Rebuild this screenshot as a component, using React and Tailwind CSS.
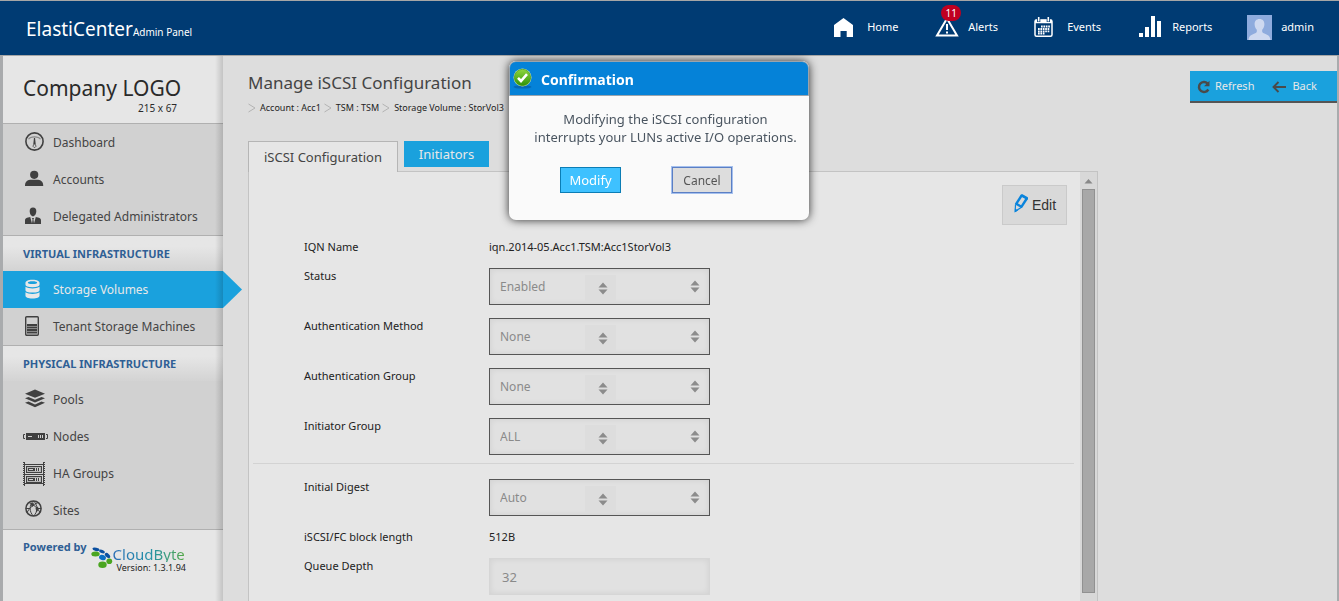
import React from "react";

const accountLinks = [
  { label: "Dashboard", Icon: GaugeIcon },
  { label: "Accounts", Icon: PersonIcon },
  { label: "Delegated Administrators", Icon: SuitIcon },
];

const virtualLinks = [
  { label: "Storage Volumes", Icon: DatabaseIcon, active: true },
  { label: "Tenant Storage Machines", Icon: TowerIcon },
];

const physicalLinks = [
  { label: "Pools", Icon: LayersIcon },
  { label: "Nodes", Icon: NodeIcon, wide: true },
  { label: "HA Groups", Icon: RackIcon, wide: true },
  { label: "Sites", Icon: GlobeIcon },
];

function GaugeIcon() {
  return (
    <svg width="20" height="20" viewBox="0 0 20 20" fill="none" stroke="#404040">
      <circle cx="9.500" cy="9.500" r="8.600" strokeWidth="1.600" />
      <path d="M3.500 7.200C5.500 4 13.500 4 15.500 7.200" stroke="#888" strokeWidth="1.200" />
      <path d="M9.500 6.500 8.600 12.500 8 14.300 9.500 15.800 11 14.300 10.400 12.500Z" strokeWidth=".8" />
      <path d="M9.500 6v6.500" strokeWidth="1.200" />
    </svg>
  );
}

function PersonIcon() {
  return (
    <svg width="20" height="18" viewBox="0 0 20 18" fill="#404040">
      <circle cx="9.200" cy="4.800" r="4.100" />
      <path d="M0 16v-1C0 12 2 10 5 9.700h8.200c3 .3 5 2.300 5 5.300v1Z" />
    </svg>
  );
}

function SuitIcon() {
  return (
    <svg width="18" height="18" viewBox="0 0 18 18" fill="#404040">
      <path d="M8 .5c2.200 0 3.500 1.600 3.300 4-.1 2-1.400 4.800-3.300 4.800S4.800 6.500 4.700 4.500C4.500 2.100 5.800.5 8 .5Z" />
      <path d="M0 17v-3.500c0-1.500.7-2.300 2-2.700l3.200-.9L7 16.500l.6-4-.7-1.500h2.200l-.7 1.500.6 4 1.800-6.600 3.200.9c1.300.4 2 1.200 2 2.700V17Z" />
    </svg>
  );
}

function DatabaseIcon() {
  return (
    <svg width="15" height="20" viewBox="0 0 16 21" fill="#e8e8e8">
      <path d="M.5 4C.5 2 3 .5 8 .5S15.500 2 15.500 4v2c0 1.500-2.500 2.500-7.500 2.500S.5 7.500.5 6ZM8 5.200c3 0 5-.6 5-1.400S11 2.300 8 2.300s-5 .7-5 1.500 2 1.400 5 1.400Z" fillRule="evenodd" />
      <path d="M.5 8.200C2.500 9.500 5 10 8 10s5.500-.5 7.500-1.800v3.600c0 1.500-2.500 2.500-7.500 2.500s-7.500-1-7.500-2.500Z" />
      <path d="M.5 14c2 1.300 4.500 1.800 7.500 1.800s5.500-.5 7.500-1.800v3.600c0 1.700-2.500 2.900-7.500 2.900s-7.500-1.200-7.500-2.900Z" />
    </svg>
  );
}

function TowerIcon() {
  return (
    <svg width="15" height="20" viewBox="0 0 15 20" fill="none" stroke="#404040">
      <rect x=".7" y=".7" width="12.600" height="18.600" rx="1" strokeWidth="1.400" />
      <path d="M2 9h10M2 11.500h10M2 14h10M2 16.500h10" strokeWidth="1.900" />
    </svg>
  );
}

function LayersIcon() {
  return (
    <svg width="21" height="19" viewBox="0 0 21 19" fill="#404040">
      <path d="M10 .5 20 4.700 10 8.800 0 4.700Z" />
      <path d="M0 9.200 3.500 8l6.500 2.800L16.500 8 20 9.200l-10 4.300Z" />
      <path d="M0 13.800l3.500-1.300 6.500 2.900 6.500-2.900 3.500 1.300-10 4.400Z" />
    </svg>
  );
}

function NodeIcon() {
  return (
    <svg width="25" height="9" viewBox="0 0 25 9" fill="none">
      <path d="M2 2.500H.5v4H2M23 2.500h1.500v4H23" stroke="#404040" />
      <rect x="3" y="1" width="19" height="7" fill="#404040" />
      <path d="M5 4.500h4M15.500 3v3M17.500 3v3M19.500 3v3" stroke="#d1d1d1" />
    </svg>
  );
}

function RackIcon() {
  return (
    <svg width="22" height="24" viewBox="0 0 22 24" shapeRendering="crispEdges" fill="none" stroke="#404040">
      <path d="M.5 0v24M21.500 0v24" strokeDasharray="1 1" />
      <path d="M1.500 0v24M20.500 0v24M2 2.500h18M2 12.500h18M2 21.500h18" />
      <path d="M3 4h16v7H3zM3 13.500h16v7H3z" fill="#404040" stroke="none" />
      <path d="M4.500 5.500h13v4h-13zM4.500 15.500h13v4h-13z" stroke="#b5b5b5" />
      <path d="M6 7.500h4M12.500 6v3M14.500 6v3M16.500 6v3M6 17.500h4M12.500 16v3M14.500 16v3M16.500 16v3" stroke="#d1d1d1" />
    </svg>
  );
}

function GlobeIcon() {
  return (
    <svg width="18" height="20" viewBox="0 0 18 20" fill="none" stroke="#404040">
      <circle cx="8.500" cy="8.500" r="7.600" strokeWidth="1.500" />
      <path d="M8.500 1c-4.500 4-4.500 11 0 15M8.500 1c4.500 4 4.500 11 0 15M4 2.500c5 2 9 6 11 10M13 2.500c-5 2-9 6-11 10M1 8.500h4M12 8.500h4" />
      <path d="M5.500 4l3-1.500.5 3-2 1.500ZM10.500 8l2.500-1.500.5 3-2 3Z" fill="#404040" stroke="none" />
    </svg>
  );
}

function HomeIcon() {
  return (
    <svg width="20" height="19" viewBox="0 0 20 19" fill="#fff">
      <path d="M9.500 0 19 7v12h-6.300v-6H6.500v6H0V7Z" />
    </svg>
  );
}

function AlertIcon() {
  return (
    <svg width="24" height="20" viewBox="0 0 24 20" fill="none" stroke="#fff">
      <path d="M12 1.500 22 18.500H2Z" strokeWidth="2" />
      <path d="M12 7v6M12 14.500v2" strokeWidth="2" />
    </svg>
  );
}

function CalendarIcon() {
  return (
    <svg width="19" height="20" viewBox="0 0 19 20" fill="none" stroke="#fff">
      <rect x="1" y="3" width="17" height="16.200" rx="1.500" strokeWidth="1.500" />
      <path d="M1 4.500h17" strokeWidth="3.500" />
      <path d="M4.700 0v5M14.300 0v5" stroke="#003b73" strokeWidth="3.200" />
      <path d="M4.700 0v4.500M14.300 0v4.500" strokeWidth="1.600" />
      <path d="M7 9.500h9M4 12h12M4 14.300h12M4 16.500h7" strokeWidth="1.800" strokeDasharray="1.700 .7" />
    </svg>
  );
}

function BarsIcon() {
  return (
    <svg width="23" height="22" viewBox="0 0 23 22" fill="#fff">
      <path d="M0 17h4v4H0zM6 11h4v10H6zM12 0h4v21h-4zM18 5h4v16h-4z" />
    </svg>
  );
}

function AvatarIcon() {
  return (
    <svg width="25" height="25" viewBox="0 0 25 25">
      <path d="M0 0h25v25H0z" fill="#8eabdd" />
      <path d="M12.500 4c3.300 0 5 2.200 4.900 5.300-.1 2.500-1 4.200-2.200 5.400-.3 2.300.2 3 2.200 3.900 3 1.200 5.600 2 6.100 6.400h-22c.5-4.400 3.100-5.200 6.100-6.400 2-.9 2.500-1.600 2.200-3.900-1.200-1.200-2.100-2.900-2.200-5.400C7.500 6.200 9.200 4 12.500 4Z" fill="#ced9f0" />
    </svg>
  );
}

function RefreshIcon() {
  return (
    <svg width="14" height="14" viewBox="0 0 14 14" fill="none">
      <path d="M10.500 3.400A5 5 0 1 0 11.300 9.500" stroke="#4a4a4a" strokeWidth="2.500" />
      <path d="M12.500.8v5.400H7.100Z" fill="#4a4a4a" />
    </svg>
  );
}

function BackIcon() {
  return (
    <svg width="14" height="12" viewBox="0 0 14 12" fill="none" stroke="#4a4a4a" strokeWidth="1.900">
      <path d="M6.500 1 1.500 6l5 5M1.500 6H14" />
    </svg>
  );
}

function PencilIcon() {
  return (
    <svg width="15" height="19" viewBox="0 0 15 19" fill="none" stroke="#0a84dc">
      <path d="M7.600 1.500 12.800 4.500 7.400 12.800 2.200 9.800Z" strokeWidth="2.400" strokeLinejoin="round" />
      <path d="M6.300 1.500 8.500.2 13.800 3.200v2.500Z" fill="#0a84dc" stroke="none" />
      <path d="M1.500 10.500 1.200 17.300 7.200 13.500" strokeWidth="1.200" />
      <path d="M.8 14.500v3.700l3.500-1.700Z" fill="#0a84dc" stroke="none" />
    </svg>
  );
}

function CheckIcon() {
  return (
    <svg width="20" height="21" viewBox="0 0 20 21">
      <defs>
        <linearGradient id="green" x1="0" y1="0" x2="0" y2="1">
          <stop offset="0" stopColor="#8ed63e" />
          <stop offset="1" stopColor="#2f9208" />
        </linearGradient>
      </defs>
      <ellipse cx="9.500" cy="19" rx="9" ry="1.600" fill="#0568b5" />
      <circle cx="9.500" cy="9.500" r="9" fill="#cfe8b0" />
      <circle cx="9.500" cy="9.500" r="8.200" fill="url(#green)" stroke="#3d8d14" strokeWidth=".6" />
      <path d="m5 9.800 3 3.200 6-6.800" fill="none" stroke="#fff" strokeWidth="2.600" />
    </svg>
  );
}

function CloudByteMark() {
  return (
    <svg width="22" height="22" viewBox="0 0 22 22">
      <g fill="#0a4fa0">
        <ellipse cx="5" cy="2.300" rx="3.600" ry="1.700" transform="rotate(12 5 2.300)" />
        <ellipse cx="11" cy="4.500" rx="3" ry="1.700" transform="rotate(20 11 4.500)" />
        <ellipse cx="16.500" cy="8.500" rx="3.200" ry="1.900" transform="rotate(45 16.500 8.500)" />
        <ellipse cx="11.500" cy="10.500" rx="3.500" ry="2.600" fill="#0a6fc4" transform="rotate(20 11.500 10.500)" />
      </g>
      <g fill="#4aa520">
        <ellipse cx="4.500" cy="7" rx="4.200" ry="2.500" />
        <ellipse cx="18.300" cy="14.300" rx="2.900" ry="2.800" />
        <ellipse cx="11.500" cy="17.700" rx="4.200" ry="3.300" />
      </g>
    </svg>
  );
}

function SortArrows() {
  return (
    <svg width="10" height="13" viewBox="0 0 10 13" fill="#8c8c8c">
      <path d="M5 .5 9.500 5.500h-9zM5 12.500.5 7.500h9z" />
    </svg>
  );
}

function NavGroup({ links }) {
  return (
    <ul className="border-b border-[#b0b0b0] bg-[#d1d1d1]">
      {links.map(({ label, Icon, active, wide }) => (
        <li key={label}>
          <a
            href="#"
            className={
              active
                ? "relative flex h-[37px] items-center bg-[#1aa1dd] pl-5 text-[#e8e8e8]"
                : "flex h-[37px] items-center pl-5 text-[#444]"
            }
          >
            <span className={wide ? "w-[30px] shrink-0" : "w-[30px] shrink-0 pb-[2px] pl-[2px]"}>
              <Icon />
            </span>
            {label}
            {active && (
              <svg className="absolute top-0 left-full" width="20" height="37" viewBox="0 0 20 37">
                <path d="M0 0 19 18.500 0 37Z" fill="#1aa1dd" />
              </svg>
            )}
          </a>
        </li>
      ))}
    </ul>
  );
}

function NavHeading({ children }) {
  return (
    <h2 className="flex h-[35px] items-center bg-linear-to-b from-[#e6e6e6] from-30% to-[#d3d3d3] pt-px pl-5 text-[11px] font-bold text-[#2f5f95]">
      {children}
    </h2>
  );
}

function Sidebar() {
  return (
    <aside className="relative z-10 w-[220px] shrink-0 bg-[#e6e6e6] text-[12px]">
      <div className="flex h-[68px] flex-col border-b border-[#b0b0b0] pt-[18px] pl-5 text-[#2a2a2a]">
        <span className="text-[21px] leading-7">Company LOGO</span>
        <span className="pl-[115px] text-[10px] leading-3 whitespace-nowrap">215 x 67</span>
      </div>
      <nav aria-label="Main">
        <NavGroup links={accountLinks} />
        <NavHeading>VIRTUAL INFRASTRUCTURE</NavHeading>
        <NavGroup links={virtualLinks} />
        <NavHeading>PHYSICAL INFRASTRUCTURE</NavHeading>
        <NavGroup links={physicalLinks} />
      </nav>
      <div className="flex pt-[9px] pl-5">
        <span className="text-[11px] leading-4 font-bold text-[#2f5f95]">Powered by</span>
        <span className="mt-2 ml-1">
          <CloudByteMark />
        </span>
        <div className="mt-[7px] flex flex-col">
          <span className="bg-linear-to-r from-[#2a6db5] via-[#2490a8] to-[#55a83c] bg-clip-text text-[15px] leading-4 text-transparent">
            CloudByte
          </span>
          <span className="pl-1 text-[9px] leading-3 text-[#222]">Version: 1.3.1.94</span>
        </div>
      </div>
      <div className="pointer-events-none absolute inset-y-0 right-0 w-2 bg-linear-to-r from-transparent to-black/15" />
    </aside>
  );
}

function Header() {
  return (
    <header className="flex h-14 items-center border-t border-b border-[#a6a6a6] bg-[#003b73] pr-[25px] pb-[2px] pl-[26px] text-[11px] text-white">
      <div className="flex items-baseline pt-1">
        <span className="text-[19px]">ElastiCenter</span>
        <span className="text-[10px]">Admin Panel</span>
      </div>
      <nav aria-label="Toolbar" className="ml-auto flex items-center">
        <a href="#" className="flex w-[101px] items-center gap-[13px]">
          <HomeIcon />
          Home
        </a>
        <a href="#" className="relative flex w-[99px] items-center gap-[9px]">
          <AlertIcon />
          Alerts
          <span className="absolute -top-3 left-[6px] flex h-4 w-5 items-center justify-center rounded-full bg-[#c00020] text-[10px]">
            11
          </span>
        </a>
        <a href="#" className="flex w-[105px] items-center gap-[14px]">
          <CalendarIcon />
          Events
        </a>
        <a href="#" className="flex w-[108px] items-center gap-[10px]">
          <BarsIcon />
          Reports
        </a>
        <a href="#" className="flex items-center gap-[9px]">
          <AvatarIcon />
          admin
        </a>
      </nav>
    </header>
  );
}

function FieldRow({ id, label, children }) {
  return (
    <div className="flex">
      <label htmlFor={id} className="w-[185px] shrink-0 leading-4">
        {label}
      </label>
      {children}
    </div>
  );
}

function SelectRow({ id, label, value }) {
  return (
    <FieldRow id={id} label={label}>
      <div className="relative w-[221px]">
        <select
          id={id}
          disabled
          className="block h-[37px] w-full appearance-none border border-[#555] bg-[#e1e1e1] px-[10px] text-[12px] text-[#8a8a8a] opacity-100 shadow-[inset_0_0_6px_rgba(0,0,0,0.08)]"
        >
          <option>{value}</option>
        </select>
        <span className="pointer-events-none absolute top-[7px] left-24 flex h-[26px] w-[31px] items-center justify-center bg-[#dddddd] pl-[5px]">
          <SortArrows />
        </span>
        <span className="pointer-events-none absolute top-3 right-[10px]">
          <SortArrows />
        </span>
      </div>
    </FieldRow>
  );
}

function ConfigForm() {
  return (
    <form className="flex-1 pl-1 text-[11px] text-[#222]">
      <div className="flex justify-end pt-[13px] pr-[13px]">
        <button
          type="button"
          className="flex h-10 w-[65px] items-center gap-[3px] border border-[#cacaca] bg-[#d9d9d9] pl-[11px] font-['Liberation_Sans',sans-serif] text-[14px] text-[#333]"
        >
          <span className="pb-1">
            <PencilIcon />
          </span>
          Edit
        </button>
      </div>
      <div className="mt-[14px] flex flex-col gap-[13px] pl-[51px]">
        <dl className="flex leading-4">
          <dt className="w-[185px] shrink-0">IQN Name</dt>
          <dd>iqn.2014-05.Acc1.TSM:Acc1StorVol3</dd>
        </dl>
        <SelectRow id="status" label="Status" value="Enabled" />
        <SelectRow id="auth-method" label="Authentication Method" value="None" />
        <SelectRow id="auth-group" label="Authentication Group" value="None" />
        <SelectRow id="initiator-group" label="Initiator Group" value="ALL" />
      </div>
      <hr className="mt-2 mr-[6px] border-[#d3d3d3]" />
      <div className="mt-[15px] flex flex-col gap-[13px] pl-[51px]">
        <SelectRow id="digest" label="Initial Digest" value="Auto" />
        <dl className="flex leading-4">
          <dt className="w-[185px] shrink-0">iSCSI/FC block length</dt>
          <dd>512B</dd>
        </dl>
        <FieldRow id="queue-depth" label="Queue Depth">
          <input
            id="queue-depth"
            type="text"
            disabled
            defaultValue="32"
            className="h-[37px] w-[221px] border border-[#d6d6d6] bg-[#e1e1e1] px-3 text-[13px] text-[#8a8a8a] shadow-[inset_0_0_6px_rgba(0,0,0,0.08)]"
          />
        </FieldRow>
      </div>
    </form>
  );
}

function Scrollbar() {
  return (
    <div className="flex w-[17px] flex-col items-center bg-[#d8d8d8]" aria-hidden="true">
      <svg className="shrink-0" width="17" height="17" viewBox="0 0 17 17" fill="#888">
        <path d="M8.500 7 12.500 11.500h-8z" />
      </svg>
      <div className="mb-2 w-[13px] flex-1 border border-[#919191] bg-[#a8a8a8]" />
    </div>
  );
}

function Breadcrumbs() {
  return (
    <nav aria-label="Breadcrumb" className="mt-[3px]">
      <ol className="flex text-[9px] leading-5 text-[#222]">
        {["Account : Acc1", "TSM : TSM", "Storage Volume : StorVol3"].map((crumb) => (
          <li key={crumb} className="flex items-center gap-1 pr-[3px]">
            <svg width="8" height="10" viewBox="0 0 8 10" fill="none" stroke="#b3b3b3">
              <path d="M.5 1 7 5 .5 9" />
            </svg>
            {crumb}
          </li>
        ))}
      </ol>
    </nav>
  );
}

function ConfirmDialog() {
  return (
    <div className="fixed inset-x-0 top-[61px] z-20 flex justify-center pr-[21px]">
      <div
        role="dialog"
        aria-labelledby="confirm-title"
        className="h-[159px] w-[300px] overflow-hidden rounded-[7px] bg-[#fafafa] text-[#4a5560] shadow-[0_0_10px_rgba(0,0,0,0.8)]"
      >
        <div className="flex h-[35px] items-center gap-2 rounded-t-[7px] border border-[#9aa4ad] bg-[#0582d8] pl-[3px] text-white">
          <CheckIcon />
          <h2 id="confirm-title" className="pt-[2px] text-[14px] font-bold">
            Confirmation
          </h2>
        </div>
        <p className="pt-[14px] pl-[13px] text-center text-[13px] leading-[18px]">
          Modifying the iSCSI configuration
          <br />
          interrupts your LUNs active I/O operations.
        </p>
        <div className="mt-[21px] flex gap-[51px] pl-[51px]">
          <button type="button" className="h-[26px] w-[61px] border border-[#0b7db5] bg-[#3ec1ff] pt-px text-[13px] text-white">
            Modify
          </button>
          <button
            type="button"
            className="h-[26px] w-[60px] border border-[#5b7fc4] bg-[#dddddd] pt-px text-[12px] text-[#555] ring-1 ring-[#a5c0ee]"
          >
            Cancel
          </button>
        </div>
      </div>
    </div>
  );
}

export default function App() {
  return (
    <div className="flex min-h-screen flex-col bg-[#a9abad] font-['Noto_Sans',sans-serif]">
      <Header />
      <div className="flex flex-1 pr-[2px] pl-[3px]">
        <Sidebar />
        <main className="flex flex-1 flex-col bg-[#dddddd] pl-[25px]">
          <div className="flex items-start justify-between pt-[15px]">
            <div>
              <h1 className="text-[17px] leading-6 text-[#444]">Manage iSCSI Configuration</h1>
              <Breadcrumbs />
            </div>
            <div className="flex h-8 w-[147px] items-center border-b-2 border-[#555] bg-[#1aa1dd] pt-px pl-[7px] text-[11px] text-[#e8e8e8]">
              <button type="button" className="flex items-center gap-1">
                <RefreshIcon />
                Refresh
              </button>
              <button type="button" className="ml-[18px] flex items-center gap-[6px]">
                <BackIcon />
                Back
              </button>
            </div>
          </div>
          <div role="tablist" className="mt-[23px] flex h-[30px] items-start gap-[6px]">
            <button
              type="button"
              role="tab"
              aria-selected="true"
              className="relative z-1 h-[31px] w-[150px] border border-b-0 border-[#b5b5b5] bg-[#e6e6e6] pt-px text-[13px] text-[#444]"
            >
              iSCSI Configuration
            </button>
            <button type="button" role="tab" aria-selected="false" className="h-[26px] w-[85px] bg-[#1aa1dd] pt-px text-[13px] text-[#e8e8e8]">
              Initiators
            </button>
          </div>
          <section className="flex w-[850px] flex-1 border border-b-0 border-[#c3c3c3] bg-[#e6e6e6]">
            <ConfigForm />
            <Scrollbar />
          </section>
        </main>
      </div>
      <ConfirmDialog />
    </div>
  );
}
